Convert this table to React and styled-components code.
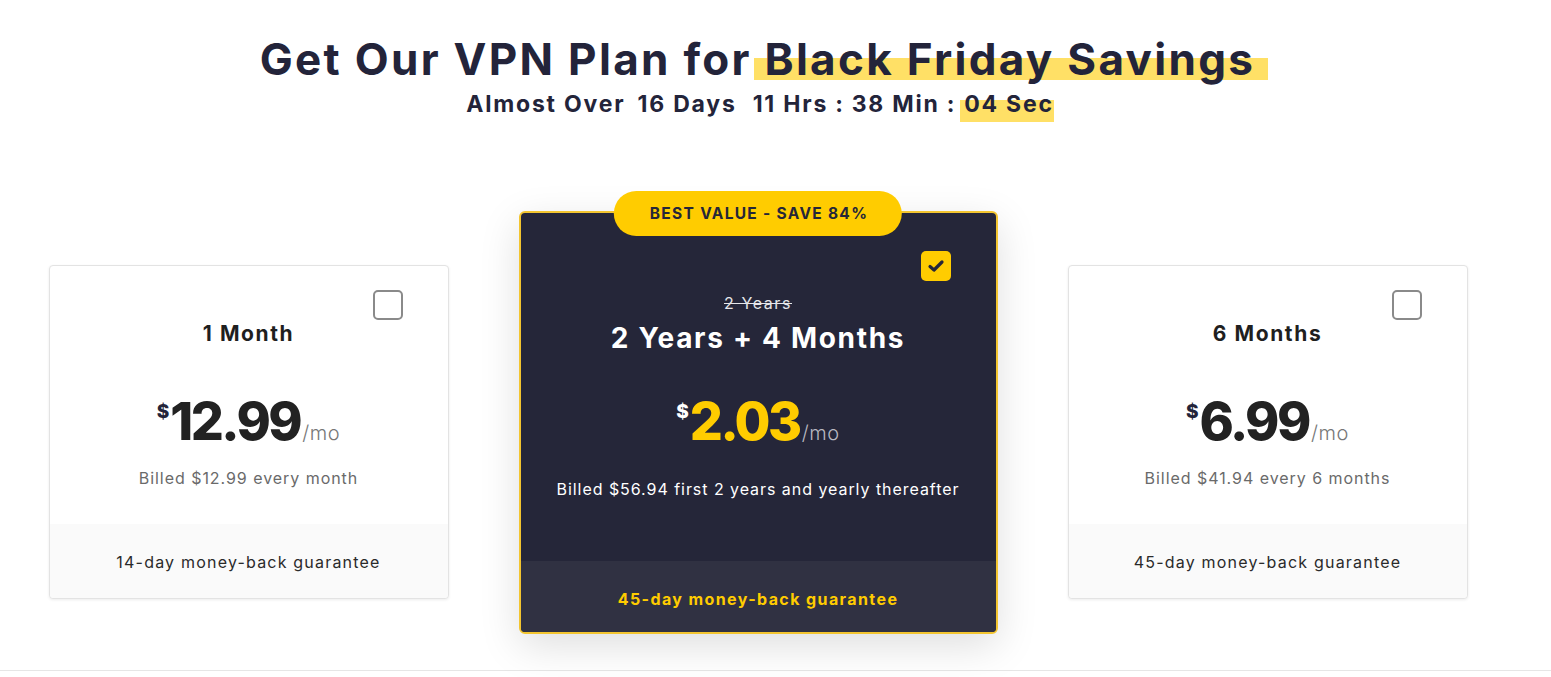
import React from 'react';
import styled, { createGlobalStyle } from 'styled-components';

const GlobalStyle = createGlobalStyle`
  html, body { margin: 0; padding: 0; background: #fff; }
  body { font-family: Inter, "Noto Sans", Arial, sans-serif; color: #23243a; }
`;

const plans = [
  {
    id: '1m',
    title: '1 Month',
    price: '12.99',
    billed: 'Billed $12.99 every month',
    guarantee: '14-day money-back guarantee',
  },
  {
    id: '28m',
    featured: true,
    badge: 'BEST VALUE - SAVE 84%',
    oldTitle: '2 Years',
    title: '2 Years + 4 Months',
    price: '2.03',
    billed: 'Billed $56.94 first 2 years and yearly thereafter',
    guarantee: '45-day money-back guarantee',
  },
  {
    id: '6m',
    title: '6 Months',
    price: '6.99',
    billed: 'Billed $41.94 every 6 months',
    guarantee: '45-day money-back guarantee',
  },
];

export default function App() {
  return (
    <>
      <GlobalStyle />
      <Page>
        <Container>
          <Heading>
            Get Our VPN Plan for<Marker> Black Friday Savings</Marker>
          </Heading>
          <Countdown>
            <span>Almost Over</span>
            <Unit $space={4}>16 Days</Unit>
            <Unit $space={8}>11 Hrs</Unit>
            <Sep>:</Sep>
            <span>38 Min</span>
            <Sep>:</Sep>
            <SmallMarker>04 Sec</SmallMarker>
          </Countdown>

          <Cards>
            {plans.map((p) => (
              <Card key={p.id} $featured={p.featured}>
                {p.badge && <Badge>{p.badge}</Badge>}
                <Check $checked={p.featured}>
                  {p.featured && (
                    <svg width="18" height="18" viewBox="0 0 18 18">
                      <polyline
                        points="3,9.5 7,13 15,5"
                        fill="none"
                        stroke="#252639"
                        strokeWidth="3.2"
                        strokeLinecap="round"
                        strokeLinejoin="round"
                      />
                    </svg>
                  )}
                </Check>
                <CardBody $featured={p.featured}>
                  {p.oldTitle && <OldTitle>{p.oldTitle}</OldTitle>}
                  <PlanTitle $featured={p.featured}>{p.title}</PlanTitle>
                  <PriceRow $featured={p.featured}>
                    <Dollar $featured={p.featured}>$</Dollar>
                    <Amount $featured={p.featured}>{p.price}</Amount>
                    <PerMonth $featured={p.featured}>/mo</PerMonth>
                  </PriceRow>
                  <Billed $featured={p.featured}>{p.billed}</Billed>
                </CardBody>
                <Guarantee $featured={p.featured}>{p.guarantee}</Guarantee>
              </Card>
            ))}
          </Cards>
        </Container>
        <Divider />
      </Page>
    </>
  );
}

const Page = styled.div`
  width: 100%;
  height: 677px;
  overflow: hidden;
  padding-top: 34px;
  box-sizing: border-box;
`;

const Container = styled.main`
  width: 1516px;
  display: flex;
  flex-direction: column;
  align-items: center;
`;

const Heading = styled.h1`
  margin: 0;
  font-size: 44px;
  line-height: 50px;
  font-weight: 700;
  letter-spacing: 2.3px;
  color: #23243a;
  white-space: nowrap;
  padding-left: 12px;
`;

const Marker = styled.span`
  position: relative;
  z-index: 0;
  padding-right: 13px;
  &::before {
    content: '';
    position: absolute;
    left: 2px;
    right: 0;
    top: 26px;
    height: 22px;
    background: #ffe066;
    z-index: -1;
  }
`;

const Countdown = styled.div`
  margin-top: 6px;
  display: flex;
  align-items: center;
  gap: 8px;
  font-size: 23px;
  line-height: 28px;
  font-weight: 700;
  letter-spacing: 1.8px;
  color: #23243a;
  padding-left: 4px;
`;

const Unit = styled.span`
  margin-left: ${(p) => p.$space}px;
`;

const Sep = styled.span`
  margin: 0 -1px;
`;

const SmallMarker = styled.span`
  position: relative;
  z-index: 0;
  padding: 0 0 0 1px;
  &::before {
    content: '';
    position: absolute;
    left: -3px;
    right: 0;
    top: 10px;
    height: 22px;
    background: #ffe066;
    z-index: -1;
  }
`;

const Cards = styled.div`
  margin-top: 93px;
  display: flex;
  align-items: flex-start;
  gap: 70px;
`;

const Card = styled.section`
  position: relative;
  box-sizing: border-box;
  width: ${(p) => (p.$featured ? '479px' : '400px')};
  margin-top: ${(p) => (p.$featured ? '0' : '54px')};
  background: ${(p) => (p.$featured ? '#252639' : '#fff')};
  border: ${(p) => (p.$featured ? '2px solid #f3c530' : '1px solid #e3e3e3')};
  border-radius: ${(p) => (p.$featured ? '6px' : '4px')};
  box-shadow: ${(p) =>
    p.$featured ? '0 12px 40px rgba(0,0,0,0.13)' : '0 1px 3px rgba(0,0,0,0.08)'};
  display: flex;
  flex-direction: column;
`;

const Badge = styled.div`
  position: absolute;
  top: -22px;
  left: 50%;
  transform: translateX(-50%);
  height: 45px;
  padding: 0 34px 0 36px;
  box-sizing: border-box;
  border-radius: 23px;
  background: #ffcc00;
  color: #252639;
  font-size: 15.5px;
  font-weight: 700;
  letter-spacing: 1.3px;
  display: flex;
  align-items: center;
  white-space: nowrap;
`;

const Check = styled.div`
  position: absolute;
  top: ${(p) => (p.$checked ? '38px' : '24px')};
  right: 45px;
  width: 30px;
  height: 30px;
  box-sizing: border-box;
  border-radius: 5px;
  background: ${(p) => (p.$checked ? '#ffcc00' : '#fff')};
  border: ${(p) => (p.$checked ? 'none' : '2px solid #8a8a8a')};
  display: grid;
  place-items: center;
`;

const CardBody = styled.div`
  height: ${(p) => (p.$featured ? '348px' : '258px')};
  box-sizing: border-box;
  padding-top: ${(p) => (p.$featured ? '80px' : '56px')};
  display: flex;
  flex-direction: column;
  align-items: center;
`;

const OldTitle = styled.div`
  font-size: 16px;
  line-height: 20px;
  letter-spacing: 1.6px;
  color: #e6e6ea;
  text-decoration: line-through;
  margin-bottom: 8px;
`;

const PlanTitle = styled.h2`
  margin: 0;
  font-size: ${(p) => (p.$featured ? '28px' : '21px')};
  line-height: ${(p) => (p.$featured ? '34px' : '24px')};
  letter-spacing: ${(p) => (p.$featured ? '1.7px' : '1.6px')};
  font-weight: 700;
  color: ${(p) => (p.$featured ? '#fff' : '#1f1f1f')};
`;

const PriceRow = styled.div`
  margin-top: ${(p) => (p.$featured ? '39px' : '48px')};
  display: flex;
  align-items: baseline;
  height: 56px;
`;

const Dollar = styled.span`
  align-self: flex-start;
  margin-top: 8px;
  margin-right: 1px;
  font-size: 19px;
  line-height: 20px;
  font-weight: 800;
  color: ${(p) => (p.$featured ? '#fff' : '#23243a')};
`;

const Amount = styled.span`
  font-size: 52px;
  line-height: 56px;
  font-weight: 800;
  letter-spacing: -2.5px;
  color: ${(p) => (p.$featured ? '#ffcc00' : '#222')};
`;

const PerMonth = styled.span`
  margin-left: 2px;
  font-size: 20px;
  font-weight: 300;
  letter-spacing: 0.6px;
  color: ${(p) => (p.$featured ? '#b8b8c0' : '#777')};
`;

const Billed = styled.p`
  margin: ${(p) => (p.$featured ? '29px' : '18px')} 0 0;
  font-size: 16px;
  line-height: 20px;
  font-weight: 400;
  letter-spacing: 0.95px;
  color: ${(p) => (p.$featured ? '#fff' : '#6a6a6a')};
`;

const Guarantee = styled.div`
  height: ${(p) => (p.$featured ? '71px' : '74px')};
  box-sizing: border-box;
  padding-top: ${(p) => (p.$featured ? '5px' : '1px')};
  display: flex;
  align-items: center;
  justify-content: center;
  background: ${(p) => (p.$featured ? '#303142' : '#fafafa')};
  color: ${(p) => (p.$featured ? '#ffcc00' : '#2a2a2a')};
  font-size: 16px;
  letter-spacing: ${(p) => (p.$featured ? '1.4px' : '1.2px')};
  font-weight: ${(p) => (p.$featured ? 700 : 400)};
  border-radius: 0 0 4px 4px;
`;

const Divider = styled.hr`
  margin: 36px 0 0;
  border: none;
  border-top: 1px solid #e6e6e6;
`;
